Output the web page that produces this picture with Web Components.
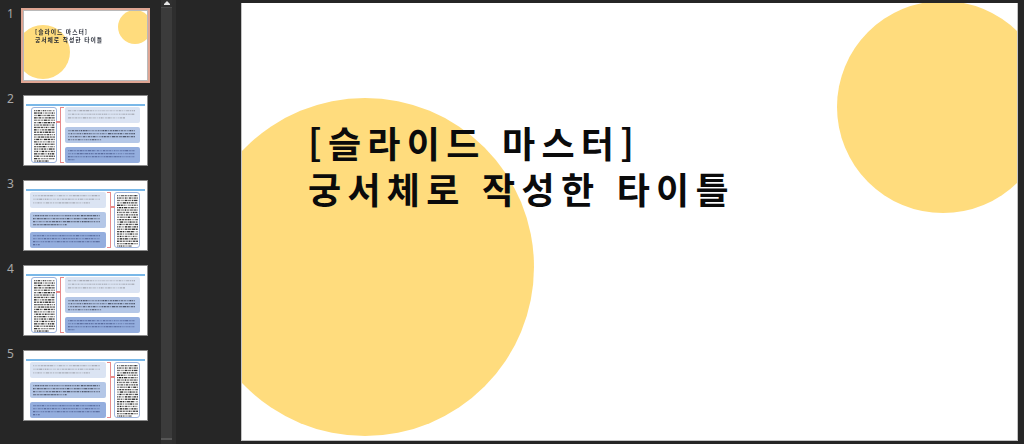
<!DOCTYPE html>
<html lang="ko">
<head>
<meta charset="utf-8">
<title>슬라이드</title>
<style>
  html, body { margin: 0; height: 100%; background: #262626; overflow: hidden; }
</style>
</head>
<body>
<ppt-app>
  <ppt-thumb slot="thumbs" num="1" selected><title-thumb></title-thumb></ppt-thumb>
  <ppt-thumb slot="thumbs" num="2"><content-thumb seed="3"></content-thumb></ppt-thumb>
  <ppt-thumb slot="thumbs" num="3"><content-thumb side="right" seed="11"></content-thumb></ppt-thumb>
  <ppt-thumb slot="thumbs" num="4"><content-thumb seed="3"></content-thumb></ppt-thumb>
  <ppt-thumb slot="thumbs" num="5"><content-thumb side="right" seed="11"></content-thumb></ppt-thumb>
  <main-slide slot="stage"></main-slide>
</ppt-app>

<script>
// App shell: thumbnail pane, scrollbar, slide stage
class PptApp extends HTMLElement {
  constructor() {
    super();
    this.attachShadow({ mode: 'open' });
  }

  connectedCallback() {
    this.shadowRoot.innerHTML = `
    <style>
      :host {
        display: grid;
        grid-template-columns: 161px 11px 4px 1fr;
        height: 444px;
        width: 1024px;
        background: #262626;
      }
      .thumbs {
        display: flex;
        flex-direction: column;
        gap: 14px;
        padding-top: 10px;
      }
      .bar {
        background: #303030;
        display: flex;
        flex-direction: column;
        align-items: center;
      }
      .btn {
        height: 7px;
        flex: none;
        display: flex;
        flex-direction: column;
        align-items: center;
        padding-top: 1px;
        box-sizing: border-box;
      }
      .arrow {
        width: 0;
        height: 0;
        border-left: 3px solid transparent;
        border-right: 3px solid transparent;
        border-bottom: 3px solid #e6e6e6;
      }
      .base {
        width: 6px;
        height: 1px;
        background: #e6e6e6;
      }
      .track {
        width: 100%;
        height: 433px;
        flex: none;
        box-sizing: border-box;
        background: #3b3b3b;
        border-top: 1px solid #4b4b4b;
        border-bottom: 2px solid #565656;
      }
      .strip { background: #2e2e2e; }
      .stage {
        padding: 3px 0 0 65px;
      }
    </style>
    <div class="thumbs"><slot name="thumbs"></slot></div>
    <div class="bar">
      <div class="btn"><div class="arrow"></div><div class="base"></div></div>
      <div class="track"></div>
    </div>
    <div class="strip"></div>
    <div class="stage"><slot name="stage"></slot></div>
    `;
  }
}

// One numbered row of the thumbnail pane
class PptThumb extends HTMLElement {
  constructor() {
    super();
    this.attachShadow({ mode: 'open' });
  }

  connectedCallback() {
    this.shadowRoot.innerHTML = `
    <style>
      :host {
        display: flex;
        align-items: flex-start;
        height: 71px;
        color: #a8a8a8;
        font: 12px/7px "Noto Sans", sans-serif;
      }
      .num { width: 23px; padding-left: 7px; box-sizing: border-box; }
      .frame {
        width: 125px;
        height: 71px;
        box-sizing: border-box;
        border: 1px solid #8a8a8a;
        background: #fff;
        overflow: hidden;
      }
      :host([selected]) .frame {
        border-color: #b9b9b9;
        outline: 2px solid #dfa593;
      }
    </style>
    <div class="num">${this.getAttribute('num')}</div>
    <div class="frame"><slot></slot></div>
    `;
  }
}

// Small copy of the title slide
class TitleThumb extends HTMLElement {
  constructor() {
    super();
    this.attachShadow({ mode: 'open' });
  }

  connectedCallback() {
    this.shadowRoot.innerHTML = `
    <style>
      :host {
        display: block;
        position: relative;
        height: 100%;
        overflow: hidden;
        padding: 17px 0 0 11px;
        box-sizing: border-box;
        font: 700 5.8px/7.8px "Noto Sans CJK KR", sans-serif;
        letter-spacing: 0.95px;
        color: #1f2430;
      }
      i { position: absolute; border-radius: 50%; background: #ffdc7d; }
      .big { left: -8px; top: 14px; width: 54px; height: 54px; }
      .small { left: 94px; top: -1px; width: 34px; height: 34px; }
      div { position: relative; white-space: nowrap; filter: blur(0.25px); }
    </style>
    <i class="big"></i><i class="small"></i>
    <div>[슬라이드 마스터]<br>궁서체로 작성한 타이틀</div>
    `;
  }
}

// Small content slide: text column, bracket and three tinted boxes.
// The text in these is too small to read, so it is drawn as specks.
class ContentThumb extends HTMLElement {
  constructor() {
    super();
    this.attachShadow({ mode: 'open' });
    this.seed = 1;
  }

  rand() {
    this.seed = (this.seed * 16807) % 2147483647;
    return this.seed / 2147483647;
  }

  specks(w, rows, step, color, lastWidth) {
    let out = '';
    for (let r = 0; r < rows; r++) {
      const end = r === rows - 1 ? w * lastWidth : w;
      let x = 0;
      while (x < end) {
        const len = Math.min(1 + this.rand() * 2.4, end - x);
        const op = (0.4 + this.rand() * 0.6).toFixed(2);
        out += `<rect x="${x.toFixed(1)}" y="${r * step}" width="${len.toFixed(1)}" height="1.3" fill="${color}" opacity="${op}"/>`;
        x += len + 0.6;
      }
    }
    return `<svg width="${w}" height="${rows * step}" viewBox="0 0 ${w} ${rows * step}">${out}</svg>`;
  }

  connectedCallback() {
    const right = this.getAttribute('side') === 'right';
    this.seed = Number(this.getAttribute('seed')) || 1;
    this.shadowRoot.innerHTML = `
    <style>
      :host {
        display: flex;
        flex-direction: column;
        height: 100%;
        padding-top: 8px;
        box-sizing: border-box;
      }
      .rule { height: 1.5px; margin: 0 2px; background: #7ab8e8; flex: none; }
      .body {
        display: flex;
        flex-direction: ${right ? 'row-reverse' : 'row'};
        height: 56px;
        padding: ${right ? '1.5px 7px 0 6px' : '1.5px 7px 0 7px'};
      }
      .col {
        width: 26px;
        flex: none;
        box-sizing: border-box;
        border: 1.5px solid #9db4dc;
        border-radius: 3px;
        padding: 1.5px;
        overflow: hidden;
      }
      svg { display: block; filter: blur(0.4px); }
      .brace {
        width: 8px;
        flex: none;
        position: relative;
      }
      .brace b {
        position: absolute;
        top: 0;
        bottom: 0;
        ${right ? 'left: 1px' : 'right: 1px'};
        width: 4px;
        box-sizing: border-box;
        border: 1.5px solid #e88a8a;
        border-${right ? 'left' : 'right'}: 0;
      }
      .brace u {
        position: absolute;
        top: 14px;
        ${right ? 'right: -1px' : 'left: -1px'};
        width: 4px;
        height: 1.5px;
        background: #e88a8a;
      }
      .boxes {
        flex: 1;
        display: flex;
        flex-direction: column;
        gap: 3.5px;
        min-width: 0;
      }
      .box {
        flex: 1;
        border-radius: 2px;
        padding: 3px 3px 0;
        overflow: hidden;
      }
      .a { background: #dbe4f3; }
      .b { background: #b4c7e7; }
      .c { background: #94aede; }
    </style>
    <div class="rule"></div>
    <div class="body">
      <div class="col">${this.specks(21, 22, 2.4, '#1c1c1c', 0.7)}</div>
      <div class="brace"><b></b><u></u></div>
      <div class="boxes">
        <div class="box a">${this.specks(67, 3, 3.6, '#a4a8b2', 0.85)}</div>
        <div class="box b">${this.specks(67, 4, 3, '#4c5468', 0.5)}</div>
        <div class="box c">${this.specks(67, 4, 3, '#56689a', 0.1)}</div>
      </div>
    </div>
    `;
  }
}

// The large slide in the stage
class MainSlide extends HTMLElement {
  constructor() {
    super();
    this.attachShadow({ mode: 'open' });
  }

  connectedCallback() {
    this.shadowRoot.innerHTML = `
    <style>
      :host {
        display: block;
        position: relative;
        width: 777px;
        height: 438px;
        box-sizing: border-box;
        background: #fff;
        border: solid #c4c4c4;
        border-width: 0 1px 1px 1px;
        overflow: hidden;
      }
      i { position: absolute; border-radius: 50%; background: #ffdc7d; }
      .big { left: -46px; top: 95px; width: 338px; height: 338px; }
      .small { left: 595px; top: -2px; width: 212px; height: 212px; }
      .title {
        position: relative;
        padding: 116px 0 0 66px;
        font: 700 36px/46px "Noto Sans CJK KR", sans-serif;
        letter-spacing: 6.3px;
        color: #0b0b0b;
        white-space: nowrap;
      }
      .title div { height: 46px; }
    </style>
    <i class="big"></i><i class="small"></i>
    <div class="title">
      <div>[슬라이드 마스터]</div>
      <div>궁서체로 작성한 타이틀</div>
    </div>
    `;
  }
}

customElements.define('ppt-app', PptApp);
customElements.define('ppt-thumb', PptThumb);
customElements.define('title-thumb', TitleThumb);
customElements.define('content-thumb', ContentThumb);
customElements.define('main-slide', MainSlide);
</script>
</body>
</html>
